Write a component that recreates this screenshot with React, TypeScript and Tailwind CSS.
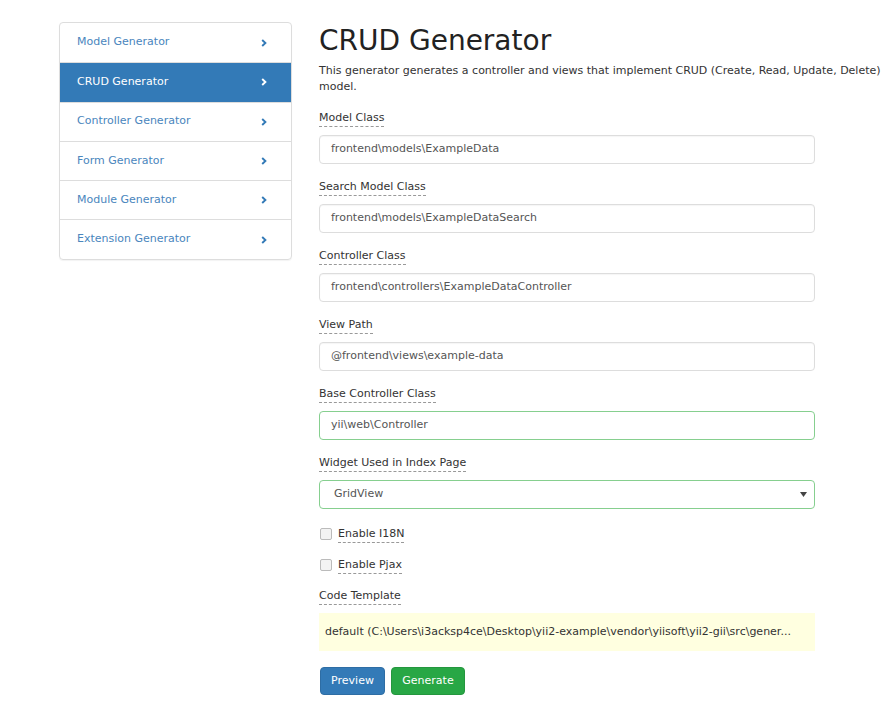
import React from "react";

const navItems = [
  "Model Generator",
  "CRUD Generator",
  "Controller Generator",
  "Form Generator",
  "Module Generator",
  "Extension Generator",
];

const fields = [
  { label: "Model Class", value: "frontend\\models\\ExampleData" },
  { label: "Search Model Class", value: "frontend\\models\\ExampleDataSearch" },
  { label: "Controller Class", value: "frontend\\controllers\\ExampleDataController" },
  { label: "View Path", value: "@frontend\\views\\example-data" },
];

function Chevron({ active }: { active: boolean }) {
  return (
    <svg width="6" height="8" viewBox="0 0 6 8" className={active ? "text-white" : "text-[#337ab7]"}>
      <path d="M1.2 1 L4.4 4 L1.2 7" fill="none" stroke="currentColor" strokeWidth="1.9" />
    </svg>
  );
}

function FieldLabel({ text }: { text: string }) {
  return (
    <div className="flex">
      <span className="leading-4 text-[#333] border-b border-dashed border-[#999]">{text}</span>
    </div>
  );
}

export default function App() {
  return (
    <div
      className="w-[886px] h-[710px] bg-white flex text-[11px] text-[#333] overflow-hidden"
      style={{ fontFamily: '"DejaVu Sans", Verdana, sans-serif' }}
    >
      {/* Sidebar */}
      <div className="pl-[59px] pt-[22px] w-[319px] shrink-0">
        <div className="w-[233px] border border-[#ddd] rounded-[4px] overflow-hidden shadow-[0_1px_1px_rgba(0,0,0,0.05)]">
          {navItems.map((item, i) => {
            const active = item === "CRUD Generator";
            return (
              <div
                key={item}
                className={`h-[39.3px] flex items-center justify-between pl-[17px] pr-[24px] ${
                  i > 0 ? "border-t border-[#ddd]" : ""
                } ${active ? "bg-[#337ab7] text-white border-[#337ab7]" : "text-[#4a86bd]"}`}
              >
                <span>{item}</span>
                <Chevron active={active} />
              </div>
            );
          })}
        </div>
      </div>

      {/* Main */}
      <div className="flex-1 pt-[25px]">
        <h1 className="text-[28px] leading-[31px] font-normal text-[#222] mb-[7px]">CRUD Generator</h1>
        <p className="leading-4 whitespace-nowrap">
          This generator generates a controller and views that implement CRUD (Create, Read, Update, Delete)
        </p>
        <p className="leading-4 mb-[15px]">model.</p>

        {fields.map((f) => (
          <div key={f.label} className="mb-[15px]">
            <FieldLabel text={f.label} />
            <div className="mt-[8px] w-[496px] h-[29px] border border-[#ddd] rounded-[4px] flex items-center px-[11px] text-[#555] shadow-[inset_0_1px_1px_rgba(0,0,0,0.04)]">
              {f.value}
            </div>
          </div>
        ))}

        <div className="mb-[15px]">
          <FieldLabel text="Base Controller Class" />
          <div className="mt-[8px] w-[496px] h-[29px] border border-[#86cf8f] rounded-[4px] flex items-center px-[11px] text-[#555]">
            yii\web\Controller
          </div>
        </div>

        <div className="mb-[17px]">
          <FieldLabel text="Widget Used in Index Page" />
          <div className="mt-[8px] w-[496px] h-[29px] border border-[#86cf8f] rounded-[4px] flex items-center justify-between pl-[14px] pr-[7px] text-[#555]">
            <span>GridView</span>
            <svg width="7" height="5" viewBox="0 0 7 5">
              <path d="M0 0 H7 L3.5 5 Z" fill="#444" />
            </svg>
          </div>
        </div>

        {["Enable I18N", "Enable Pjax"].map((c) => (
          <div key={c} className="flex items-start mb-[14px]">
            <div className="w-[12px] h-[12px] mt-[2px] ml-[1px] mr-[6px] rounded-[2px] border border-[#bbb] bg-[#f3f3f3]" />
            <span className="leading-4 border-b border-dashed border-[#999]">{c}</span>
          </div>
        ))}

        <FieldLabel text="Code Template" />
        <div className="mt-[8px] w-[496px] h-[38px] bg-[#ffffe0] flex items-center px-[6px] text-[#333] whitespace-nowrap">
          default (C:\Users\i3acksp4ce\Desktop\yii2-example\vendor\yiisoft\yii2-gii\src\gener...
        </div>

        <div className="mt-[16px] flex gap-[6px] ml-[1px]">
          <button className="h-[28px] w-[65px] rounded-[4px] bg-[#337ab7] border border-[#2e6da4] text-white text-[11px]">
            Preview
          </button>
          <button className="h-[28px] w-[74px] rounded-[4px] bg-[#28a745] border border-[#24963e] text-white text-[11px]">
            Generate
          </button>
        </div>
      </div>
    </div>
  );
}
